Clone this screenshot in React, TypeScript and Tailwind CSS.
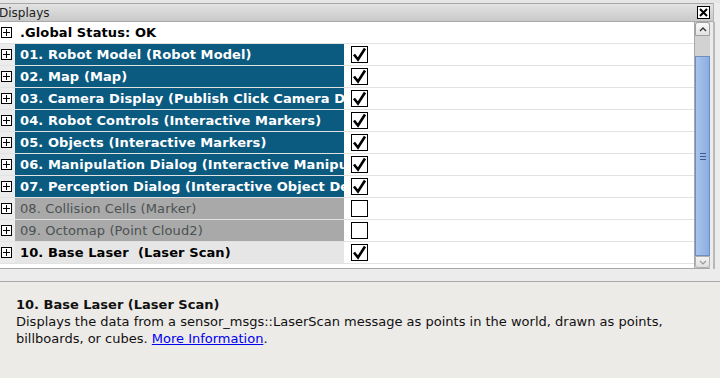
import React from 'react';

type Row = { label: string; kind: 'status' | 'on' | 'off' | 'selected'; checked?: boolean };

const rows: Row[] = [
  { label: '.Global Status: OK', kind: 'status' },
  { label: '01. Robot Model (Robot Model)', kind: 'on', checked: true },
  { label: '02. Map (Map)', kind: 'on', checked: true },
  { label: '03. Camera Display (Publish Click Camera Display)', kind: 'on', checked: true },
  { label: '04. Robot Controls (Interactive Markers)', kind: 'on', checked: true },
  { label: '05. Objects (Interactive Markers)', kind: 'on', checked: true },
  { label: '06. Manipulation Dialog (Interactive Manipulation)', kind: 'on', checked: true },
  { label: '07. Perception Dialog (Interactive Object Detection)', kind: 'on', checked: true },
  { label: '08. Collision Cells (Marker)', kind: 'off', checked: false },
  { label: '09. Octomap (Point Cloud2)', kind: 'off', checked: false },
  { label: '10. Base Laser  (Laser Scan)', kind: 'selected', checked: true },
];

const Expander = () => (
  <svg width="11" height="11" viewBox="0 0 11 11" shapeRendering="crispEdges">
    <rect x="0.5" y="0.5" width="10" height="10" fill="white" stroke="black" />
    <path d="M2 5.5 H9 M5.5 2 V9" stroke="black" />
  </svg>
);

const CheckBox = ({ checked }: { checked?: boolean }) => (
  <div className="w-[17px] h-[17px] border border-black bg-white flex items-center justify-center">
    {checked && (
      <svg width="15" height="15" viewBox="0 0 15 15">
        <path d="M2 7.5 L6 12.5 L13 1.5" fill="none" stroke="black" strokeWidth="2.6" />
      </svg>
    )}
  </div>
);

const cellStyle: Record<Row['kind'], string> = {
  status: 'bg-white text-black font-bold',
  on: 'bg-[#0b5a80] text-white font-bold',
  off: 'bg-[#a9a9a9] text-[#4b5252]',
  selected: 'bg-[#e6e6e6] text-black font-bold',
};

export default function App() {
  return (
    <div
      className="w-[720px] h-[378px] bg-[#ececec] flex flex-col overflow-hidden text-[13px]"
      style={{ fontFamily: '"DejaVu Sans", sans-serif' }}
    >
      {/* dock title */}
      <div className="h-[3px] bg-[#e6e6e6]" />
      <div className="flex">
        <div className="flex-1 h-[19px] border-t border-b border-[#a8a8a8] bg-gradient-to-b from-[#e2e2e2] to-[#c9c9c9] flex items-center justify-between pr-[3px]">
          <span className="text-[12px] text-[#222] -ml-[1px]">Displays</span>
          <div className="w-[13px] h-[13px] border border-black bg-white flex items-center justify-center">
            <svg width="9" height="9" viewBox="0 0 9 9">
              <path d="M1 1 L8 8 M8 1 L1 8" stroke="black" strokeWidth="2" />
            </svg>
          </div>
        </div>
        <div className="w-[7px] border-l border-[#b4b4b4]" />
      </div>

      {/* tree + scrollbar */}
      <div className="flex h-[247px]">
        <div className="w-[694px] bg-white border-b border-[#a8a8a8]">
          {rows.map((r) => (
            <div key={r.label} className="flex h-[22px] border-b border-[#e2e2e2]">
              <div
                className={`w-[15px] flex items-center pl-[1px] ${r.kind === 'status' ? 'bg-white' : 'bg-[#ececec]'}`}
              >
                <Expander />
              </div>
              <div
                className={`w-[329px] pl-[5px] flex items-center whitespace-pre overflow-hidden tracking-[0.1px] ${cellStyle[r.kind]}`}
              >
                {r.label}
              </div>
              <div className="flex-1 flex items-center pl-[6px] border-l border-white">
                {r.kind !== 'status' && <CheckBox checked={r.checked} />}
              </div>
            </div>
          ))}
        </div>

        {/* scrollbar */}
        <div className="w-[16px] flex flex-col bg-[#d2d2d2] border-l border-[#a8a8a8] border-b">
          <div className="h-[14px] bg-gradient-to-b from-[#fafafa] to-[#e2e2e2] border border-[#a0a0a0] rounded-t-[3px] flex items-center justify-center">
            <svg width="8" height="5" viewBox="0 0 8 5">
              <path d="M1 4 L4 1 L7 4" fill="none" stroke="#333" strokeWidth="1.4" />
            </svg>
          </div>
          <div className="h-[20px]" />
          <div className="flex-1 bg-gradient-to-r from-[#a9c4ec] to-[#8bade0] border border-[#6f8fc4] flex items-center justify-center">
            <div className="flex flex-col gap-[2px]">
              <div className="w-[6px] h-px bg-[#3d5a8c]" />
              <div className="w-[6px] h-px bg-[#3d5a8c]" />
              <div className="w-[6px] h-px bg-[#3d5a8c]" />
            </div>
          </div>
          <div className="h-[12px] bg-gradient-to-b from-[#f2f2f2] to-[#e0e0e0] border border-[#b0b0b0] rounded-b-[3px] flex items-center justify-center">
            <svg width="8" height="5" viewBox="0 0 8 5">
              <path d="M1 1 L4 4 L7 1" fill="none" stroke="#9a9a9a" strokeWidth="1.2" />
            </svg>
          </div>
        </div>
        <div className="w-[10px] flex">
          <div className="w-[3px]" />
          <div className="w-[2px] bg-[#b8b8b8]" />
        </div>
      </div>

      {/* splitter gap */}
      <div className="h-[12px] bg-[#ececec]" />

      {/* description */}
      <div className="flex-1 bg-[#edebe8] border-t border-[#a8a8a8] pl-[16px] pt-[14px] text-[#111]">
        <div className="font-bold leading-[17px]">10. Base Laser (Laser Scan)</div>
        <div className="leading-[17px]">
          Displays the data from a sensor_msgs::LaserScan message as points in the world, drawn as points,
          <br />
          billboards, or cubes. <span className="text-[#0000ee] underline">More Information</span>.
        </div>
      </div>
    </div>
  );
}
